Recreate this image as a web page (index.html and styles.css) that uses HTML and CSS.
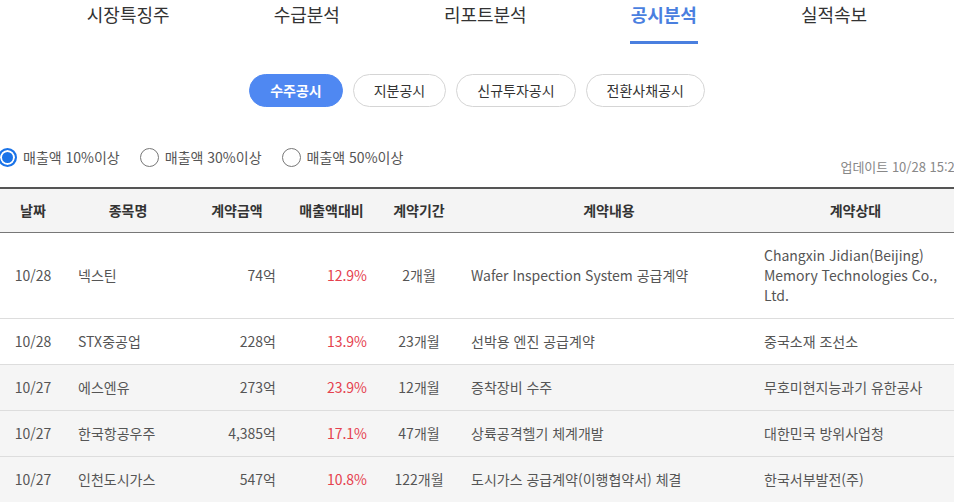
FILE: index.html
```html
<!DOCTYPE html>
<html lang="ko">
<head>
  <meta charset="UTF-8" />
  <meta name="viewport" content="width=device-width, initial-scale=1" />
  <title>공시분석 — 수주공시</title>
  <link rel="stylesheet" href="styles.css">
</head>
<body>

<nav class="tabs">
  <a class="tab" href="#">시장특징주</a>
  <a class="tab" href="#">수급분석</a>
  <a class="tab" href="#">리포트분석</a>
  <a class="tab active" href="#">공시분석</a>
  <a class="tab" href="#">실적속보</a>
</nav>

<div class="pills">
  <button class="pill active">수주공시</button>
  <button class="pill">지분공시</button>
  <button class="pill">신규투자공시</button>
  <button class="pill">전환사채공시</button>
</div>

<div class="board">
  <div class="filter-row">
    <div class="radios">
      <label class="radio"><input type="radio" name="ratio" checked /> 매출액 10%이상</label>
      <label class="radio"><input type="radio" name="ratio" /> 매출액 30%이상</label>
      <label class="radio"><input type="radio" name="ratio" /> 매출액 50%이상</label>
    </div>
    <div class="updated">업데이트 10/28 15:20</div>
  </div>

  <table class="list">
    <colgroup>
      <col class="c-date" />
      <col class="c-name" />
      <col class="c-amount" />
      <col class="c-ratio" />
      <col class="c-period" />
      <col class="c-content" />
      <col class="c-party" />
    </colgroup>
    <thead>
      <tr>
        <th>날짜</th>
        <th>종목명</th>
        <th>계약금액</th>
        <th>매출액대비</th>
        <th>계약기간</th>
        <th>계약내용</th>
        <th class="party">계약상대</th>
      </tr>
    </thead>
    <tbody id="rows"></tbody>
  </table>
</div>

<script>
  const contracts = [
    { date: "10/28", name: "넥스틴", amount: "74억", ratio: "12.9%", period: "2개월", content: "Wafer Inspection System 공급계약", party: "Changxin Jidian(Beijing) Memory Technologies Co., Ltd." },
    { date: "10/28", name: "STX중공업", amount: "228억", ratio: "13.9%", period: "23개월", content: "선박용 엔진 공급계약", party: "중국소재 조선소" },
    { date: "10/27", name: "에스엔유", amount: "273억", ratio: "23.9%", period: "12개월", content: "증착장비 수주", party: "무호미현지능과기 유한공사" },
    { date: "10/27", name: "한국항공우주", amount: "4,385억", ratio: "17.1%", period: "47개월", content: "상륙공격헬기 체계개발", party: "대한민국 방위사업청" },
    { date: "10/27", name: "인천도시가스", amount: "547억", ratio: "10.8%", period: "122개월", content: "도시가스 공급계약(이행협약서) 체결", party: "한국서부발전(주)" }
  ];

  function renderRows() {
    const latest = contracts[0].date;
    let html = "";
    contracts.forEach((item) => {
      const rowClass = item.date === latest ? "" : "older";
      html += `
        <tr class="${rowClass}">
          <td class="date">${item.date}</td>
          <td class="name">${item.name}</td>
          <td class="num">${item.amount}</td>
          <td class="num up">${item.ratio}</td>
          <td class="date">${item.period}</td>
          <td>${item.content}</td>
          <td class="party">${item.party}</td>
        </tr>
      `;
    });
    document.getElementById("rows").innerHTML = html;
  }

  renderRows();
</script>

</body>
</html>
```

FILE: styles.css
```css
body {
  font-family: "Noto Sans CJK KR", "Noto Sans", sans-serif;
  margin: 0;
  padding: 0;
  background: #fff;
  color: #333;
  overflow: hidden;
}
/* 상단 탭 */
.tabs {
  display: flex;
  justify-content: center;
  gap: 102px;
}
.tab {
  display: block;
  padding: 2px 1px 15px;
  line-height: 24px;
  font-size: 18px;
  color: #333;
  text-decoration: none;
  border-bottom: 3px solid transparent;
}
.tab.active {
  color: #4a7fdf;
  font-weight: 700;
  border-bottom-color: #4a7fdf;
}
.pills {
  display: flex;
  justify-content: center;
  gap: 10px;
  margin-top: 30px;
}
.pill {
  font-family: inherit;
  font-size: 14px;
  line-height: 31px;
  padding: 0 20px;
  border: 1px solid #d5d5d5;
  border-radius: 17px;
  background: #fff;
  color: #333;
  cursor: pointer;
}
.pill.active {
  background: #4f88f2;
  border-color: #4f88f2;
  color: #fff;
  font-weight: 700;
}
.board {
  width: 964px;
  margin-left: -2px;
}
.filter-row {
  display: flex;
  justify-content: space-between;
  align-items: flex-end;
  margin-top: 40px;
  padding-bottom: 12px;
}
.radios {
  display: flex;
  gap: 20px;
  margin-bottom: 8px;
}
.radio {
  display: flex;
  align-items: center;
  gap: 6px;
  font-size: 14px;
  line-height: 20px;
  color: #555;
  cursor: pointer;
}
.radio input {
  appearance: none;
  margin: 0;
  width: 19px;
  height: 19px;
  border: 1px solid #777;
  border-radius: 50%;
  background: #fff;
}
.radio input:checked {
  border: 2px solid #1a73e8;
  box-shadow: inset 0 0 0 2px #fff;
  background: #1a73e8;
}
.updated {
  font-size: 13px;
  line-height: 16px;
  color: #888;
}
.list {
  width: 100%;
  border-collapse: collapse;
  table-layout: fixed;
  font-size: 14px;
}
.c-date { width: 70px; }
.c-name { width: 120px; }
.c-amount { width: 98px; }
.c-ratio { width: 91px; }
.c-period { width: 84px; }
.c-content { width: 296px; }
.list th {
  background: #f4f4f4;
  border-top: 2px solid #555;
  border-bottom: 1px solid #777;
  padding: 12px 10px;
  line-height: 19px;
  font-weight: 700;
  color: #333;
  text-align: center;
}
.list td {
  padding: 12px 10px 13px;
  line-height: 20px;
  color: #555;
  border-bottom: 1px solid #ddd;
  vertical-align: middle;
}
.list th.party {
  padding-right: 18px;
}
.list td.party {
  padding-left: 7px;
  padding-right: 21px;
}
.list tr.older td {
  background: #f5f5f5;
}
.date { text-align: center; }
.num { text-align: right; }
.list td.up { color: #e5414e; }
```
